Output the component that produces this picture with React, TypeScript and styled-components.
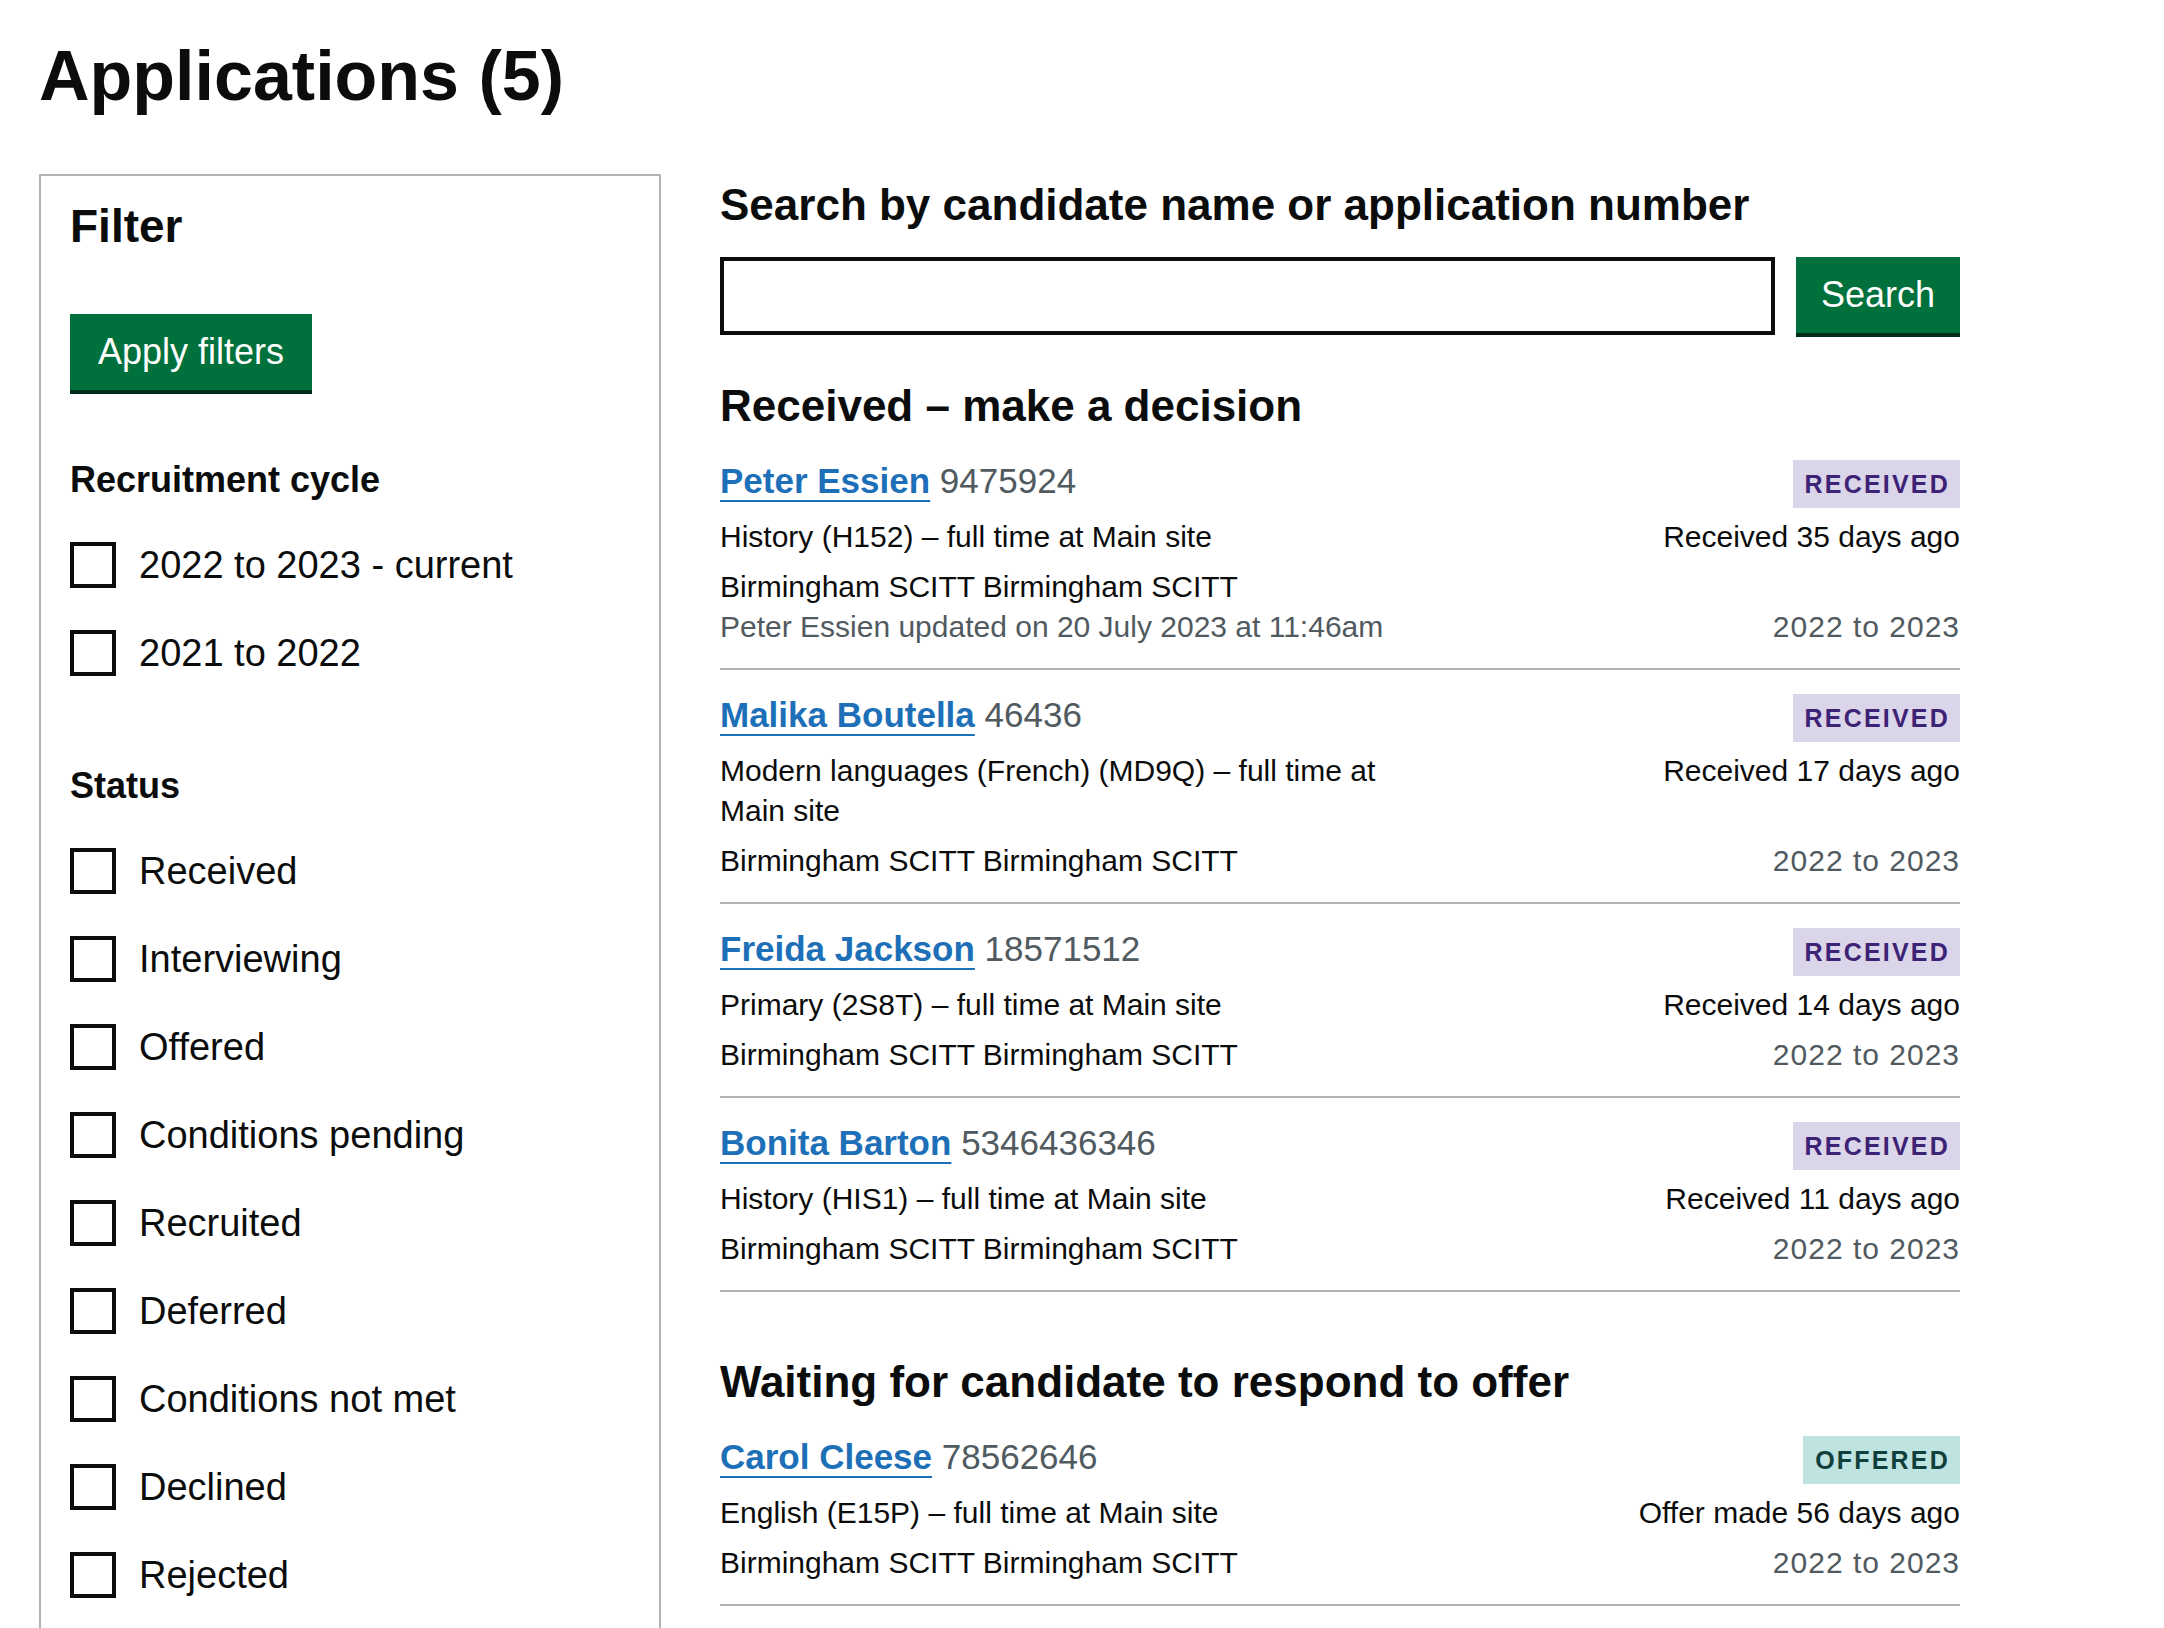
import styled, { createGlobalStyle } from 'styled-components';

type Tone = 'received' | 'offered';

type Application = {
    name: string;
    reference: string;
    course: string;
    provider: string;
    updated?: string;
    status: Tone;
    when: string;
    cycle: string;
};

const received: Application[] = [
    {
        name: 'Peter Essien',
        reference: '9475924',
        course: 'History (H152) – full time at Main site',
        provider: 'Birmingham SCITT Birmingham SCITT',
        updated: 'Peter Essien updated on 20 July 2023 at 11:46am',
        status: 'received',
        when: 'Received 35 days ago',
        cycle: '2022 to 2023',
    },
    {
        name: 'Malika Boutella',
        reference: '46436',
        course: 'Modern languages (French) (MD9Q) – full time at Main site',
        provider: 'Birmingham SCITT Birmingham SCITT',
        status: 'received',
        when: 'Received 17 days ago',
        cycle: '2022 to 2023',
    },
    {
        name: 'Freida Jackson',
        reference: '18571512',
        course: 'Primary (2S8T) – full time at Main site',
        provider: 'Birmingham SCITT Birmingham SCITT',
        status: 'received',
        when: 'Received 14 days ago',
        cycle: '2022 to 2023',
    },
    {
        name: 'Bonita Barton',
        reference: '5346436346',
        course: 'History (HIS1) – full time at Main site',
        provider: 'Birmingham SCITT Birmingham SCITT',
        status: 'received',
        when: 'Received 11 days ago',
        cycle: '2022 to 2023',
    },
];

const offered: Application[] = [
    {
        name: 'Carol Cleese',
        reference: '78562646',
        course: 'English (E15P) – full time at Main site',
        provider: 'Birmingham SCITT Birmingham SCITT',
        status: 'offered',
        when: 'Offer made 56 days ago',
        cycle: '2022 to 2023',
    },
];

const cycles = ['2022 to 2023 - current', '2021 to 2022'];
const statuses = [
    'Received',
    'Interviewing',
    'Offered',
    'Conditions pending',
    'Recruited',
    'Deferred',
    'Conditions not met',
    'Declined',
    'Rejected',
];

const ApplicationRow = ({ item }: { item: Application }) => (
    <StyledRow>
        <StyledRowHead>
            <StyledNameLine>
                <StyledNameLink href="#">{item.name}</StyledNameLink> <StyledReference>{item.reference}</StyledReference>
            </StyledNameLine>
            <StyledTag $tone={item.status}>{item.status}</StyledTag>
        </StyledRowHead>
        <StyledRowBody>
            <StyledDetails>
                <StyledLine>{item.course}</StyledLine>
                <StyledLine $spaced>{item.provider}</StyledLine>
                {item.updated && <StyledLine $muted>{item.updated}</StyledLine>}
            </StyledDetails>
            <StyledMeta>
                <StyledLine>{item.when}</StyledLine>
                <StyledCycle>{item.cycle}</StyledCycle>
            </StyledMeta>
        </StyledRowBody>
    </StyledRow>
);

const CheckboxGroup = ({ title, options }: { title: string; options: string[] }) => (
    <StyledGroup>
        <StyledLegend>{title}</StyledLegend>
        <StyledCheckboxList>
            {options.map((option) => (
                <StyledCheckboxItem key={option}>
                    <StyledCheckbox type="checkbox" />
                    {option}
                </StyledCheckboxItem>
            ))}
        </StyledCheckboxList>
    </StyledGroup>
);

const App = () => {
    return (
        <StyledPage>
            <GlobalStyle />
            <StyledTitle>Applications (5)</StyledTitle>
            <StyledLayout>
                <StyledFilterPanel>
                    <StyledFilterTitle>Filter</StyledFilterTitle>
                    <StyledButton $spaced>Apply filters</StyledButton>
                    <CheckboxGroup title="Recruitment cycle" options={cycles} />
                    <CheckboxGroup title="Status" options={statuses} />
                </StyledFilterPanel>

                <StyledMain>
                    <StyledSearchLabel htmlFor="search">Search by candidate name or application number</StyledSearchLabel>
                    <StyledSearchRow>
                        <StyledSearchInput id="search" type="text" />
                        <StyledButton>Search</StyledButton>
                    </StyledSearchRow>

                    <StyledSectionTitle>Received – make a decision</StyledSectionTitle>
                    {received.map((item) => (
                        <ApplicationRow key={item.reference} item={item} />
                    ))}

                    <StyledSectionTitle $wide>Waiting for candidate to respond to offer</StyledSectionTitle>
                    {offered.map((item) => (
                        <ApplicationRow key={item.reference} item={item} />
                    ))}
                </StyledMain>
            </StyledLayout>
        </StyledPage>
    );
};

const GlobalStyle = createGlobalStyle`
    * {
        box-sizing: border-box;
    }

    html,
    body {
        margin: 0;
        padding: 0;
        background: #ffffff;
    }

    body {
        font-family: 'Liberation Sans', Arial, sans-serif;
        color: #0b0c0c;
    }
`;

const StyledPage = styled.div`
    padding: 41px 39px 0;
`;

const StyledTitle = styled.h1`
    margin: 0 0 63px;
    font-size: 70px;
    line-height: 70px;
    font-weight: 700;
`;

const StyledLayout = styled.div`
    display: grid;
    grid-template-columns: 622px 1240px;
    column-gap: 59px;
    align-items: start;
`;

const StyledFilterPanel = styled.aside`
    border: 2px solid #b1b4b6;
    padding: 25px 29px 60px;
`;

const StyledFilterTitle = styled.h2`
    margin: 0 0 63px;
    font-size: 46px;
    line-height: 50px;
    font-weight: 700;
`;

const StyledButton = styled.button<{ $spaced?: boolean }>`
    flex: none;
    height: 76px;
    margin: 0 0 ${({ $spaced }) => ($spaced ? '70px' : '0')};
    padding: 0 ${({ $spaced }) => ($spaced ? '28px' : '25px')};
    border: 0;
    border-radius: 0;
    background: #00703c;
    box-shadow: 0 4px 0 #002d18;
    color: #ffffff;
    font-family: inherit;
    font-size: 36px;
    line-height: 76px;
    cursor: pointer;
`;

const StyledGroup = styled.div`
    & + & {
        margin-top: 90px;
    }
`;

const StyledLegend = styled.h3`
    margin: 0 0 42px;
    font-size: 36px;
    line-height: 40px;
    font-weight: 700;
`;

const StyledCheckboxList = styled.div`
    display: flex;
    flex-direction: column;
    gap: 42px;
`;

const StyledCheckboxItem = styled.label`
    display: flex;
    align-items: center;
    gap: 23px;
    height: 46px;
    font-size: 38px;
    line-height: 46px;
    cursor: pointer;
`;

const StyledCheckbox = styled.input`
    appearance: none;
    flex: none;
    width: 46px;
    height: 46px;
    margin: 0;
    border: 4px solid #0b0c0c;
    background: #ffffff;
`;

const StyledMain = styled.main`
    display: flex;
    flex-direction: column;
`;

const StyledSearchLabel = styled.label`
    margin: 6px 0 27px;
    font-size: 44px;
    line-height: 50px;
    font-weight: 700;
`;

const StyledSearchRow = styled.div`
    display: flex;
    align-items: flex-start;
    gap: 21px;
`;

const StyledSearchInput = styled.input`
    flex: 1;
    height: 78px;
    margin: 0;
    padding: 0 10px;
    border: 4px solid #0b0c0c;
    border-radius: 0;
    font-family: inherit;
    font-size: 36px;
`;

const StyledSectionTitle = styled.h2<{ $wide?: boolean }>`
    margin: ${({ $wide }) => ($wide ? '65px' : '46px')} 0 5px;
    font-size: 44px;
    line-height: 50px;
    font-weight: 700;
`;

const StyledRow = styled.div`
    padding: 24px 0 21px;
    border-bottom: 2px solid #b1b4b6;
`;

const StyledRowHead = styled.div`
    display: flex;
    justify-content: space-between;
    align-items: flex-start;
`;

const StyledNameLine = styled.div`
    font-size: 35px;
    line-height: 42px;
`;

const StyledNameLink = styled.a`
    color: #1d70b8;
    font-weight: 700;
    text-decoration: underline;
    text-decoration-thickness: 2px;
    text-underline-offset: 7px;
`;

const StyledReference = styled.span`
    color: #505a5f;
`;

const tagColours: Record<Tone, { bg: string; fg: string }> = {
    received: { bg: '#dbd5e9', fg: '#3d2375' },
    offered: { bg: '#bfe3e0', fg: '#10403c' },
};

const StyledTag = styled.strong<{ $tone: Tone }>`
    display: inline-block;
    padding: 11px 10px 11px 12px;
    background: ${({ $tone }) => tagColours[$tone].bg};
    color: ${({ $tone }) => tagColours[$tone].fg};
    font-size: 25px;
    line-height: 26px;
    font-weight: 700;
    letter-spacing: 2.2px;
    text-transform: uppercase;
`;

const StyledRowBody = styled.div`
    display: grid;
    grid-template-columns: 720px 1fr;
    margin-top: 9px;
`;

const StyledDetails = styled.div`
    display: flex;
    flex-direction: column;
`;

const StyledMeta = styled.div`
    display: flex;
    flex-direction: column;
    justify-content: space-between;
    text-align: right;
`;

const StyledLine = styled.p<{ $muted?: boolean; $spaced?: boolean }>`
    margin: ${({ $spaced }) => ($spaced ? '10px' : '0')} 0 0;
    color: ${({ $muted }) => ($muted ? '#505a5f' : '#0b0c0c')};
    font-size: 30px;
    line-height: 40px;
`;

const StyledCycle = styled(StyledLine)`
    color: #505a5f;
    letter-spacing: 1px;
`;

export default App;
